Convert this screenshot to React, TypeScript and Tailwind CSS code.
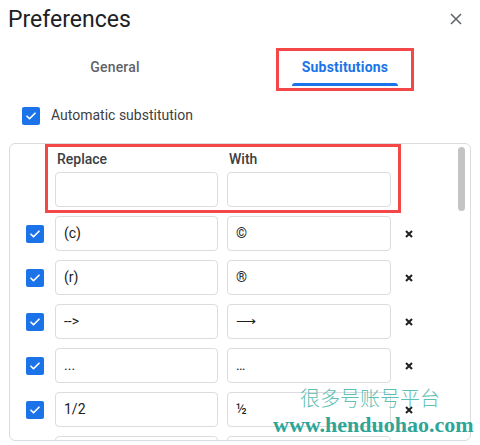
import React from 'react';

const rows = [
  { from: '(c)', to: '©' },
  { from: '(r)', to: '®' },
  { from: '-->', to: '⟶' },
  { from: '...', to: '…' },
  { from: '1/2', to: '½' },
  { from: '1/3', to: '⅓' },
];

function CheckBox({ className = '' }: { className?: string }) {
  return (
    <div className={`w-[18px] h-[18px] rounded-[2px] bg-[#1a73e8] flex items-center justify-center shrink-0 ${className}`}>
      <svg width="12" height="12" viewBox="0 0 24 24" fill="none">
        <path d="M4 12.5l5 5L20 6.5" stroke="white" strokeWidth="3.4" strokeLinecap="round" strokeLinejoin="round" />
      </svg>
    </div>
  );
}

function Field({ value, wide = false }: { value: string; wide?: boolean }) {
  return (
    <div
      className={`h-[35px] ${wide ? 'w-[164px]' : 'w-[163px]'} shrink-0 rounded-[4px] border border-[#dadce0] bg-white flex items-center pl-[8px] text-[14px] text-[#202124]`}
    >
      {value}
    </div>
  );
}

export default function App() {
  return (
    <div className="relative w-[480px] h-[445px] bg-white overflow-hidden font-['Roboto','Liberation_Sans',sans-serif]">
      {/* title bar */}
      <div className="flex items-start justify-between pl-[8px] pr-[18px] pt-[5px]">
        <h1 className="text-[23px] leading-[30px] text-[#202124]">Preferences</h1>
        <button className="mt-[8px] text-[#5f6368]">
          <svg width="12" height="12" viewBox="0 0 12 12" fill="none">
            <path d="M1 1l10 10M11 1L1 11" stroke="currentColor" strokeWidth="1.5" />
          </svg>
        </button>
      </div>

      {/* tabs */}
      <div className="flex w-[460px] mt-[22px] h-[32px]">
        <div className="flex-1 flex justify-center">
          <span className="text-[14px] leading-[20px] font-medium text-[#5f6368] tracking-[0.2px]">General</span>
        </div>
        <div className="flex-1 flex justify-center">
          <div className="flex flex-col items-center">
            <span className="text-[14px] leading-[20px] font-bold text-[#1a73e8] tracking-[0.2px]">Substitutions</span>
            <div className="mt-[6px] h-[3px] w-[106px] rounded-t-[3px] bg-[#1a73e8]" />
          </div>
        </div>
      </div>

      {/* automatic */}
      <div className="flex items-center gap-[11px] pl-[22px] mt-[16px]">
        <CheckBox />
        <span className="text-[14px] text-[#3c4043]">Automatic substitution</span>
      </div>

      {/* table */}
      <div className="relative mt-[17px] ml-[9px] w-[462px] h-[298px] rounded-[6px] border border-[#dadce0] overflow-hidden">
        <div className="pt-[5px] pl-[45px]">
          <div className="flex gap-[9px] text-[14px] leading-[20px] font-medium text-[#3c4043]">
            <span className="w-[163px] pl-[2px]">Replace</span>
            <span className="w-[164px] pl-[2px]">With</span>
          </div>
          <div className="flex gap-[9px] mt-[3px]">
            <Field value="" />
            <Field value="" wide />
          </div>
        </div>
        <div className="flex flex-col gap-[9px] mt-[9px] pl-[16px]">
          {rows.map((r) => (
            <div key={r.from} className="flex items-center h-[35px]">
              <CheckBox />
              <div className="flex gap-[9px] ml-[11px]">
                <Field value={r.from} />
                <Field value={r.to} wide />
              </div>
              <svg className="ml-[14px]" width="8" height="8" viewBox="0 0 8 8" fill="none">
                <path d="M1 1l6 6M7 1L1 7" stroke="#202124" strokeWidth="2" />
              </svg>
            </div>
          ))}
        </div>
        {/* scrollbar */}
        <div className="absolute right-[5px] top-[3px] w-[7px] h-[64px] rounded-full bg-[#c4c4c4]" />
      </div>

      {/* annotation boxes */}
      <div className="absolute left-[276px] top-[48px] w-[138px] h-[43px] border-[3px] border-[#f44848]" />
      <div className="absolute left-[45px] top-[144px] w-[356px] h-[69px] border-[3px] border-[#f44848]" />

      {/* watermark */}
      <div className="absolute left-[300px] top-[386px] text-[20px] leading-[24px] text-[#5ec0b3] font-['Noto_Sans_CJK_SC',sans-serif] font-light">
        很多号账号平台
      </div>
      <div className="absolute left-[273px] top-[413px] text-[22px] leading-[24px] font-bold text-[#2fa597] font-['Liberation_Serif',serif]">
        www.henduohao.com
      </div>
    </div>
  );
}
